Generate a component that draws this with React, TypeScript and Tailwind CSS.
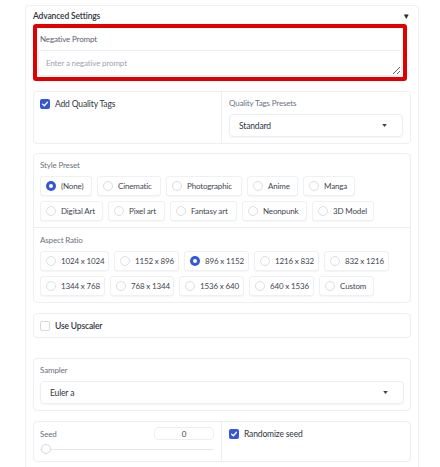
const stylePresets = [
  { label: "(None)", w: "w-[52px]", on: true },
  { label: "Cinematic", w: "w-[64px]" },
  { label: "Photographic", w: "w-[76px]" },
  { label: "Anime", w: "w-[51px]" },
  { label: "Manga", w: "w-[52px]" },
  { label: "Digital Art", w: "w-[63px]" },
  { label: "Pixel art", w: "w-[57px]" },
  { label: "Fantasy art", w: "w-[67px]" },
  { label: "Neonpunk", w: "w-[65px]" },
  { label: "3D Model", w: "w-[62px]" },
];

const ratios = [
  { label: "1024 x 1024", w: "w-[69px]" },
  { label: "1152 x 896", w: "w-[65px]" },
  { label: "896 x 1152", w: "w-[65px]", on: true },
  { label: "1216 x 832", w: "w-[65px]" },
  { label: "832 x 1216", w: "w-[65px]" },
  { label: "1344 x 768", w: "w-[65px]" },
  { label: "768 x 1344", w: "w-[64px]" },
  { label: "1536 x 640", w: "w-[65px]" },
  { label: "640 x 1536", w: "w-[65px]" },
  { label: "Custom", w: "w-[55px]" },
];

const Check = ({ on }: { on?: boolean }) =>
  on ? (
    <span className="flex h-[10px] w-[10px] shrink-0 items-center justify-center rounded-[2px] bg-[#3457d5]">
      <svg viewBox="0 0 10 10" className="h-[8px] w-[8px]">
        <path d="M2 5.2 L4.2 7.2 L8 2.8" fill="none" stroke="white" strokeWidth="1.6" strokeLinecap="round" strokeLinejoin="round" />
      </svg>
    </span>
  ) : (
    <span className="h-[10px] w-[10px] shrink-0 rounded-[2px] border border-[#d6d9de] bg-white" />
  );

const Caret = () => (
  <svg viewBox="0 0 6 4" className="h-[3px] w-[5px]">
    <path d="M0 0 H6 L3 4 Z" fill="#374151" />
  </svg>
);

const Radio = ({ label, w, on }: { label: string; w: string; on?: boolean }) => (
  <div className={`${w} flex h-[20px] items-center gap-[5px] rounded-[3px] border border-[#eef0f2] bg-white pl-[5px] shadow-[0_1px_1px_rgba(0,0,0,0.04)]`}>
    {on ? (
      <span className="flex h-[10px] w-[10px] shrink-0 items-center justify-center rounded-full bg-[#3457d5]">
        <span className="h-[4px] w-[4px] rounded-full bg-white" />
      </span>
    ) : (
      <span className="h-[10px] w-[10px] shrink-0 rounded-full border border-[#dcdfe3] bg-white" />
    )}
    <span className="whitespace-nowrap text-[#3f4652]">{label}</span>
  </div>
);

const Block = ({ className, children }: { className: string; children: React.ReactNode }) => (
  <div className={`w-[378px] rounded-[4px] border border-[#eceef1] bg-white ${className}`}>{children}</div>
);

export default function App() {
  return (
    <div
      className="h-[467px] overflow-hidden bg-white pl-[25px] pt-[5px] text-[8px] leading-[12px] tracking-[-0.15px] text-[#374151]"
      style={{ fontFamily: "Lato, 'Liberation Sans', sans-serif" }}
    >
      <div className="h-[470px] w-[394px] rounded-t-[4px] border border-b-0 border-[#eff0f2] px-[7px] pt-[3px]">
        <div className="flex h-[14px] items-center justify-between pr-[1px]">
          <span className="text-[8.5px] font-semibold text-[#2f3540]">Advanced Settings</span>
          <span className="text-[8px] text-[#1f2937]">▼</span>
        </div>

        <div className="mt-[1px] h-[57px] w-[374px] rounded-[3px] border-4 border-[#e00000] bg-white pl-[1px] pt-[5px]">
          <div className="h-[12px] pl-[2px] text-[#5b626e]">Negative Prompt</div>
          <textarea
            placeholder="Enter a negative prompt"
            className="mt-[5px] block h-[26px] w-[364px] rounded-[3px] border border-[#eceef1] bg-white pl-[7px] pt-[6px] text-[8px] leading-[12px] tracking-[-0.15px] outline-none placeholder:text-[#9ca3af]"
          />
        </div>

        <Block className="mt-[10px] flex h-[53px]">
          <div className="flex w-[188px] items-start gap-[5px] border-r border-[#eceef1] pl-[6px] pt-[7px]">
            <Check on />
            <span className="-mt-[1px] text-[8.5px] text-[#2f3540]">Add Quality Tags</span>
          </div>
          <div className="flex-1 pl-[7px] pt-[5px]">
            <div className="h-[12px] text-[#6b7280]">Quality Tags Presets</div>
            <div className="mt-[5px] flex h-[23px] w-[174px] items-center justify-between rounded-[4px] border border-[#eceef1] pl-[9px] pr-[15px] shadow-[0_1px_2px_rgba(0,0,0,0.05)]">
              <span className="text-[8.5px] text-[#2f3540]">Standard</span>
              <Caret />
            </div>
          </div>
        </Block>

        <Block className="mt-[9px]">
          <div className="px-[6px] pb-[6px] pt-[5px]">
            <div className="h-[12px] text-[#6b7280]">Style Preset</div>
            <div className="mt-[5px] flex flex-wrap gap-[5px]">
              {stylePresets.map((p) => (
                <Radio key={p.label} {...p} />
              ))}
            </div>
          </div>
          <div className="border-t border-[#eceef1] px-[6px] pb-[6px] pt-[6px]">
            <div className="h-[12px] text-[#6b7280]">Aspect Ratio</div>
            <div className="mt-[5px] flex flex-wrap gap-[5px]">
              {ratios.map((r) => (
                <Radio key={r.label} {...r} />
              ))}
            </div>
          </div>
        </Block>

        <Block className="mt-[10px] flex h-[25px] items-center gap-[5px] pl-[6px]">
          <Check />
          <span className="text-[8.5px] font-semibold text-[#2f3540]">Use Upscaler</span>
        </Block>

        <Block className="mt-[20px] h-[53px] px-[6px] pt-[5px]">
          <div className="h-[12px] text-[#6b7280]">Sampler</div>
          <div className="mt-[5px] flex h-[23px] w-[364px] items-center justify-between rounded-[4px] border border-[#eceef1] pl-[9px] pr-[15px] shadow-[0_1px_2px_rgba(0,0,0,0.05)]">
            <span className="text-[8.5px] text-[#2f3540]">Euler a</span>
            <Caret />
          </div>
        </Block>

        <Block className="mt-[10px] flex h-[41px]">
          <div className="w-[188px] border-r border-[#eceef1] pl-[6px] pr-[7px] pt-[5px]">
            <div className="flex items-start justify-between">
              <span className="mt-[1px] text-[#6b7280]">Seed</span>
              <div className="flex h-[13px] w-[60px] items-center justify-center rounded-[4px] border border-[#eceef1] text-[#374151]">
                0
              </div>
            </div>
            <div className="relative mt-[4px] h-[10px]">
              <div className="absolute left-0 right-0 top-[5px] h-[1px] bg-[#e5e7eb]" />
              <div className="absolute left-[1px] top-0 h-[10px] w-[10px] rounded-full border border-[#d6d9de] bg-white" />
            </div>
          </div>
          <div className="flex flex-1 items-start gap-[5px] pl-[7px] pt-[7px]">
            <Check on />
            <span className="-mt-[1px] text-[8.5px] text-[#2f3540]">Randomize seed</span>
          </div>
        </Block>
      </div>
    </div>
  );
}
